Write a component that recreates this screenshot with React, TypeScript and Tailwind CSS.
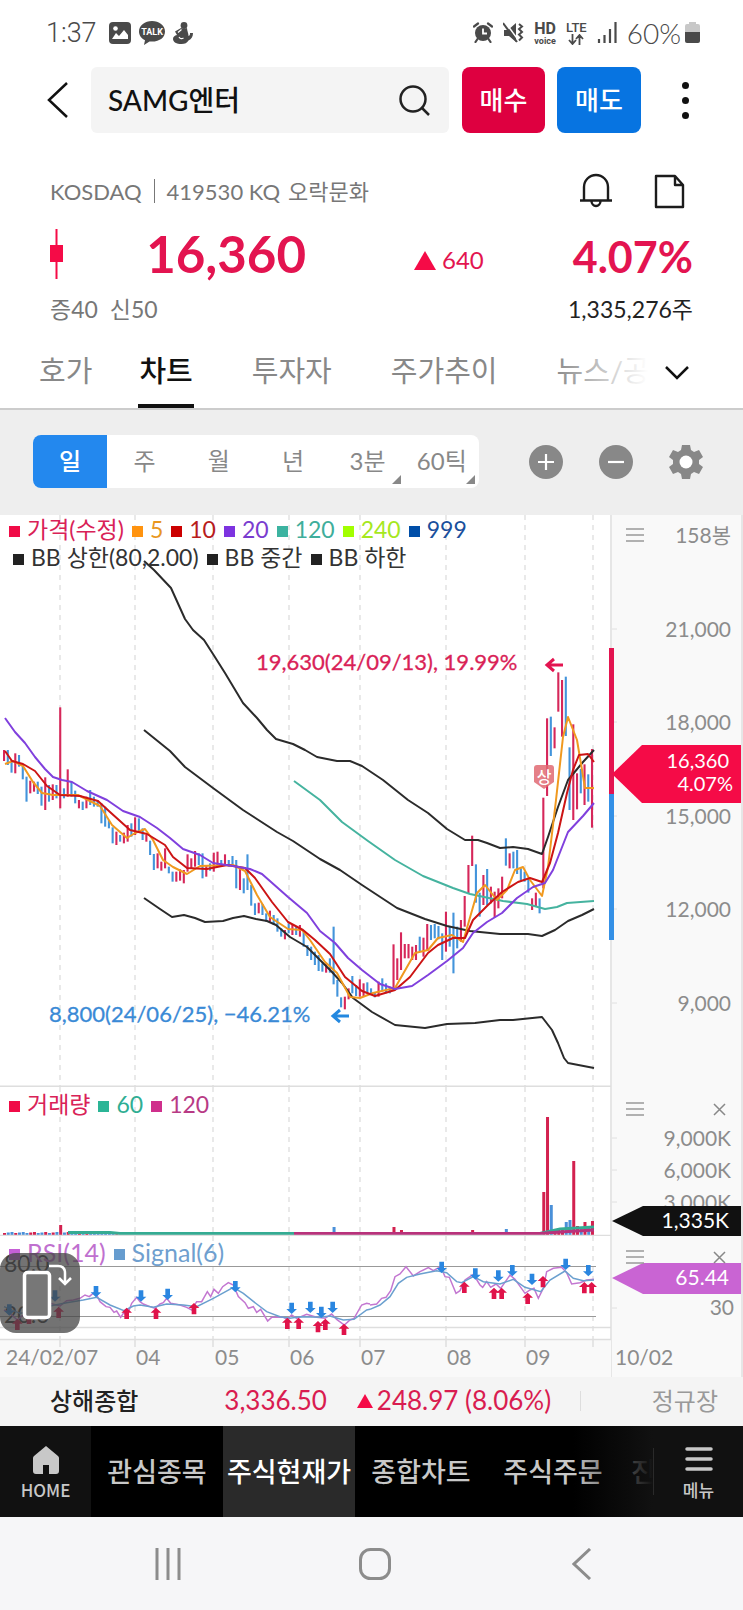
import { useState } from "react";
import type { ReactNode } from "react";
import clsx from "clsx";

type LegendItem = {
  label: string;
  text: string;
  mark: string;
};

type Signal = [number, number];

const TABS = [
  { label: "호가", gap: "mr-[45px]" },
  { label: "차트", gap: "mr-[57px]" },
  { label: "투자자", gap: "mr-[57px]" },
  { label: "주가추이", gap: "mr-[57px]" },
  { label: "뉴스/공시", gap: "" },
];

const PERIODS = ["일", "주", "월", "년", "3분", "60틱"];

const MENU = ["관심종목", "주식현재가", "종합차트", "주식주문"];

const PRICE_LEGEND: LegendItem[] = [
  { label: "가격(수정)", text: "text-[#d92257]", mark: "bg-[#f00b47]" },
  { label: "5", text: "text-[#e8971f]", mark: "bg-[#ff930f]" },
  { label: "10", text: "text-[#b81c1c]", mark: "bg-[#cc0000]" },
  { label: "20", text: "text-[#7a3ccf]", mark: "bg-[#7d33e0]" },
  { label: "120", text: "text-[#3fae9b]", mark: "bg-[#3cb3a0]" },
  { label: "240", text: "text-[#a6e81f]", mark: "bg-[#a2ff00]" },
  { label: "999", text: "text-[#1a4f9c]", mark: "bg-[#004ea8]" },
];

const BAND_LEGEND: LegendItem[] = [
  { label: "BB 상한(80,2.00)", text: "text-[#333]", mark: "bg-[#222]" },
  { label: "BB 중간", text: "text-[#333]", mark: "bg-[#222]" },
  { label: "BB 하한", text: "text-[#333]", mark: "bg-[#222]" },
];

const VOLUME_LEGEND: LegendItem[] = [
  { label: "거래량", text: "text-[#d92257]", mark: "bg-[#f00b47]" },
  { label: "60", text: "text-[#2fae93]", mark: "bg-[#2bb596]" },
  { label: "120", text: "text-[#b83a85]", mark: "bg-[#cf2f8c]" },
];

const RSI_LEGEND: LegendItem[] = [
  { label: "RSI(14)", text: "text-[#c070cf]", mark: "bg-[#c65fd6]" },
  { label: "Signal(6)", text: "text-[#6f9fcf]", mark: "bg-[#669ccf]" },
];

const MONTHS = [
  { x: 60, label: "24/02/07", labelX: 6 },
  { x: 135, label: "04", labelX: 136 },
  { x: 213, label: "05", labelX: 215 },
  { x: 289, label: "06", labelX: 290 },
  { x: 360, label: "07", labelX: 361 },
  { x: 446, label: "08", labelX: 447 },
  { x: 525, label: "09", labelX: 526 },
  { x: 593, label: "10/02", labelX: 615 },
];

// r = up day, b = down day, then high and low in thirds of a unit
const BARS =
  "r540,573 b540,585 b570,608 r550,610 b555,590 b585,628 b620,695 r632,670 r635,665 b635,672 " +
  "b650,707 r622,720 b645,695 r643,690 b645,685 r412,715 b655,685 r598,680 b635,680 b662,700 " +
  "r690,715 b695,720 r680,715 b660,705 b680,710 b690,710 b700,760 b710,770 b750,775 b772,820 " +
  "r785,825 b795,815 r788,820 r765,815 b760,800 r742,795 b745,785 b775,810 r795,815 b812,855 " +
  "b852,900 r850,895 r875,902 r835,895 b890,910 b905,935 r905,935 r898,932 r900,940 r853,905 " +
  "r865,895 r843,890 b850,885 b850,925 r885,920 b880,902 r848,905 r845,890 b870,890 r853,885 " +
  "b870,890 b858,885 b870,955 r895,960 b925,970 b853,960 b945,1007 b1000,1035 r998,1030 b1002,1035 " +
  "b1030,1055 r1022,1055 b1035,1065 b1045,1085 b1075,1100 r1080,1108 b1060,1090 r1065,1095 b1068,1095 r1065,1100 " +
  "b1085,1130 b1125,1158 b1130,1170 b1145,1185 b1155,1203 b1180,1205 r1180,1208 b1165,1208 b1070,1243 b1230,1280 " +
  "b1282,1312 r1280,1318 r1255,1288 b1218,1270 b1245,1278 r1228,1280 r1240,1280 b1237,1270 b1255,1275 b1268,1282 " +
  "r1235,1280 b1225,1262 b1240,1270 b1250,1270 r1123,1260 r1165,1230 r1087,1200 r1122,1165 r1122,1165 r1130,1170 " +
  "r1125,1170 b1100,1143 r1103,1160 r1062,1140 b1065,1110 b1062,1105 b1068,1108 b1090,1170 r1025,1145 b1070,1130 " +
  "b1028,1210 b1070,1135 r1050,1115 r978,1070 r885,972 r797,888 b883,998 b968,1040 r915,1005 b897,1005 " +
  "r950,1000 r965,1042 r955,1015 r920,985 b805,887 r850,895 b845,895 b840,912 b895,930 b905,935 " +
  "b925,968 r985,1020 r968,1010 b985,1030 r683,955 r445,678 b440,558 r472,535 r307,425 r330,500 " +
  "b320,498 b532,720 r463,750 r610,718 b597,670 r583,705 b613,695 r537,773";

const bars = BARS.split(" ").map((item, index) => {
  const [high, low] = item.slice(1).split(",").map(Number);

  return {
    x: 4 + index * 3.745,
    top: 55 + high / 3,
    bottom: 55 + low / 3,
    up: item[0] === "r",
  };
});

const UP = "#d6275a";
const DOWN = "#4394db";

// days whose volume stands out, by bar index
const VOLUME: Record<number, number> = {
  15: 10, 88: 8, 104: 8, 106: 5, 125: 5, 134: 6, 144: 43, 145: 118, 146: 30, 147: 5,
  148: 6, 149: 6, 150: 13, 151: 15, 152: 74, 153: 9, 154: 8, 155: 13, 156: 7, 157: 14,
};

const LINES = [
  {
    color: "#2b2b2b",
    points:
      "144,46 154,55 171,73 185,104 193,115 204,125 213,139 225,158 243,188 257,203 267,215 276,224 293,229 305,235 317,242 337,246 350,246 362,251 383,265 408,285 428,298 447,314 465,325 478,325 487,328 500,333 513,332 528,334 542,339 548,322 558,292 568,265 583,247 594,235",
  },
  {
    color: "#2b2b2b",
    points:
      "144,215 170,236 185,252 213,273 243,295 277,317 293,326 320,344 340,355 362,370 397,393 425,404 447,411 470,416 500,419 528,419 542,421 555,415 568,406 582,400 594,394",
  },
  {
    color: "#2b2b2b",
    points:
      "144,383 160,394 172,402 184,400 195,403 205,407 223,406 233,403 244,401 256,404 267,406 276,410 290,422 307,432 320,445 332,457 342,468 353,483 372,497 395,510 425,513 447,509 475,508 500,505 513,505 542,502 552,515 558,528 564,543 568,548 594,553",
  },
  {
    color: "#45b39f",
    points:
      "294,266 320,285 342,307 368,326 395,345 423,361 453,373 470,379 503,386 527,389 545,394 557,392 567,388 594,386",
  },
  {
    color: "#f0991f",
    points:
      "5,249 13,246 23,251 33,267 42,278 53,280 78,280 100,291 112,310 127,323 135,318 145,314 153,325 163,345 173,352 187,359 200,351 233,350 245,356 257,380 270,402 288,414 302,415 310,425 325,447 337,458 350,482 360,483 373,478 395,473 415,438 428,435 438,423 452,420 463,427 477,378 485,370 497,385 507,375 515,355 523,352 530,365 542,381 548,352 556,285 563,222 568,202 577,225 585,273 594,273",
  },
  {
    color: "#cc1414",
    points:
      "5,236 12,246 23,249 35,256 47,271 60,280 80,281 98,286 110,297 130,315 147,319 165,330 173,342 187,353 207,354 227,350 245,353 255,363 272,387 288,407 303,415 315,425 330,439 345,462 362,476 375,481 395,475 410,462 428,438 438,430 453,423 465,423 473,405 488,390 502,377 518,367 530,363 542,367 550,348 558,318 567,278 573,255 579,240 588,239 594,247",
  },
  {
    color: "#8040dd",
    points:
      "5,203 15,217 25,228 35,242 45,254 53,262 62,265 72,267 87,276 107,285 123,296 140,302 157,313 170,323 183,334 200,340 213,348 233,351 250,354 262,359 288,382 307,398 320,416 335,428 348,443 362,455 380,469 395,474 412,471 428,460 447,446 463,433 473,418 487,407 502,398 517,383 533,372 545,368 553,355 568,317 583,301 594,288",
  },
];

// The RSI history comes in two pages of 370 units each, drawn side by side.
const RSI_PAGES = [
  {
    offset: 0,
    rsi: "12,690 30,700 52,720 75,700 100,685 125,690 150,670 180,678 200,662 220,660 240,655 255,645 268,650 285,635 300,665 318,680 330,682 342,697 350,693 362,712 372,697 380,710 395,670 410,652 420,665 430,672 450,680 465,685 480,672 490,668 500,655 512,670 540,675 560,682 575,690 590,665 605,665 622,635 632,650 642,628 655,640 668,620 685,608 700,615 715,650 735,668 745,685 760,680 770,697 782,688 803,723 815,712 850,712 862,718 875,705 890,715 920,703 950,712 975,715 995,702 1010,718 1033,735 1050,720 1062,715 1085,675 1100,670 1110,672",
    signal:
      "12,680 60,700 100,695 150,678 200,668 250,660 290,652 330,675 372,692 400,678 420,675 460,682 500,672 550,675 590,680 640,655 700,622 730,640 770,672 800,695 840,710 870,715 900,710 960,712 990,708 1030,720 1062,718 1100,690 1110,688",
    down: [[28, 690], [165, 648], [288, 635], [423, 648], [503, 643], [706, 620], [875, 685], [931, 682], [964, 697], [998, 682]] as Signal[],
    up: [[52, 733], [87, 715], [176, 697], [380, 700], [468, 700], [582, 686], [862, 730], [896, 730], [954, 740], [976, 733], [1032, 748]] as Signal[],
  },
  {
    offset: 370,
    rsi: "0,675 20,672 35,655 48,652 62,632 75,590 90,582 108,560 130,588 150,575 175,563 190,572 212,560 225,590 238,592 258,640 270,632 285,600 310,583 330,615 338,622 350,605 362,622 378,612 392,625 420,585 435,598 465,640 480,630 492,625 505,655 520,625 530,575 550,565 575,562 590,578 605,612 630,608 650,600 672,598",
    signal:
      "0,688 30,675 60,650 85,610 110,592 150,582 200,572 230,578 260,605 275,608 310,590 340,605 390,612 430,598 465,622 512,635 540,600 585,573 610,595 640,602 672,600",
    down: [[215, 562], [316, 582], [385, 588], [427, 572], [486, 598], [587, 553], [655, 572]] as Signal[],
    up: [[283, 622], [372, 640], [395, 640], [473, 655], [519, 605], [643, 623], [665, 623]] as Signal[],
  },
];

function StatusBar() {
  return (
    <div className="flex h-[65px] items-center justify-between pr-[43px] pl-[46px] text-[#4a4a4a]">
      <div className="flex items-center gap-2">
        <span className="mr-1 font-[Roboto] text-[27px] leading-8 font-light">1:37</span>
        <svg width="22" height="22" viewBox="0 0 22 22" aria-hidden="true">
          <rect width="22" height="22" rx="4" fill="currentColor" />
          <path d="M3 17l4-6 3 3 5-6 4 5v4z" fill="#fff" />
          <circle cx="6.5" cy="6.5" r="2.3" fill="#fff" />
        </svg>
        <svg width="26" height="24" viewBox="0 0 26 24" aria-hidden="true">
          <path d="M13 0C6 0 0 4.500 0 10.500c0 4 2.500 7 6 8.800L5 24l5.500-3.600c10 .8 15.500-4 15.500-10C26 4.500 20 0 13 0z" fill="currentColor" />
          <text x="13" y="14" textAnchor="middle" fill="#fff" fontSize="9" fontWeight="700" fontFamily="Roboto">
            TALK
          </text>
        </svg>
        <svg width="20" height="22" viewBox="0 0 20 22" aria-hidden="true">
          <circle cx="11" cy="3.500" r="3.400" fill="currentColor" />
          <path
            d="M8 6q3 1 6 0c0 3 1.500 5 1.500 8 1.500-.5 1.500-1.500 1.500-3h3c0 3.500-1.500 6-4.500 7.500C14 21 12 22 8.500 22 3.500 22 0 20 0 17c0-2 1.500-3.500 4-4L2 9.500z"
            fill="currentColor"
          />
          <path d="M8.500 7.500L5 10.500M6 15c1 2 3 2 4.500 1" stroke="#fff" strokeWidth="1.200" fill="none" />
        </svg>
      </div>

      <div className="flex items-center gap-[10px]">
        <svg width="20" height="21" viewBox="0 0 20 21" aria-hidden="true">
          <circle cx="10" cy="11" r="8" fill="currentColor" />
          <path d="M1 4.500L5 1.500M19 4.500L15 1.500M4.500 17L2.500 20M15.500 17l2 3" stroke="currentColor" strokeWidth="2.200" strokeLinecap="round" />
          <path d="M10 6.500V11.500h4" stroke="#fff" strokeWidth="1.800" fill="none" />
        </svg>
        <svg width="21" height="21" viewBox="0 0 21 21" aria-hidden="true">
          <path d="M1 8h4l8-7v19l-7-6H1z" fill="currentColor" />
          <path d="M2 0l14 19" stroke="#fff" strokeWidth="1.500" />
          <path d="M0 1l14 19" stroke="currentColor" strokeWidth="2" />
          <path d="M16 2l3 2.500-3 2.500 3 3-3 2.500 3 3-3 3" stroke="currentColor" strokeWidth="2" fill="none" />
        </svg>
        <span className="flex flex-col items-center font-[Roboto] font-bold">
          <span className="text-[16px] leading-4">HD</span>
          <span className="text-[9px] leading-2">voice</span>
        </span>
        <span className="flex flex-col items-center font-[Roboto] font-medium">
          <span className="text-[13px] leading-[13px]">LTE</span>
          <svg width="16" height="11" viewBox="0 0 16 11" aria-hidden="true">
            <path d="M4.500 0v9M1 6l3.500 4L8 6M11.500 11V2M8 5l3.500-4L15 5" stroke="currentColor" strokeWidth="1.800" fill="none" />
          </svg>
        </span>
        <svg width="20" height="21" viewBox="0 0 20 21" aria-hidden="true">
          <path d="M2 21v-4M7.500 21v-8M13 21V7M18.500 21V0" stroke="currentColor" strokeWidth="2.200" />
        </svg>
        <span className="flex items-center gap-1">
          <span className="text-[28px] leading-8 font-light">60%</span>
          <svg width="15" height="21" viewBox="0 0 15 21" aria-hidden="true">
            <path d="M4 0h7v2h2a2 2 0 0 1 2 2v7H0V4a2 2 0 0 1 2-2h2z" fill="#c8c8c8" />
            <path d="M0 10h15v9a2 2 0 0 1-2 2H2a2 2 0 0 1-2-2z" fill="currentColor" />
          </svg>
        </span>
      </div>
    </div>
  );
}

function SearchHeader() {
  return (
    <header className="flex h-[70px] items-center pr-[38px] pl-[46px]">
      <button type="button" aria-label="뒤로" className="mr-[21px]">
        <svg width="24" height="38" viewBox="0 0 24 38" fill="none" stroke="#111" strokeWidth="2.500">
          <path d="M21 2L3 19l18 17" />
        </svg>
      </button>
      <label className="mr-[13px] flex h-[66px] min-w-0 flex-1 items-center rounded-md bg-[#f4f4f4] px-[17px]">
        <input
          aria-label="종목 검색"
          defaultValue="SAMG엔터"
          className="min-w-0 flex-1 bg-transparent text-[28px] font-medium text-[#111] outline-none"
        />
        <svg width="34" height="34" viewBox="0 0 34 34" fill="none" stroke="#222" strokeWidth="2.500" aria-hidden="true">
          <circle cx="15" cy="16" r="12.500" />
          <path d="M24 25l7 7" />
        </svg>
      </label>
      <button type="button" className="mr-3 h-[66px] w-[83px] rounded-lg bg-[#de0040] text-[26px] font-medium text-white">
        매수
      </button>
      <button type="button" className="mr-[24px] h-[66px] w-[84px] rounded-lg bg-[#0774e1] text-[26px] font-medium text-white">
        매도
      </button>
      <button type="button" aria-label="더보기" className="flex w-10 flex-col items-center gap-2">
        <span className="size-[7px] rounded-full bg-[#111]" />
        <span className="size-[7px] rounded-full bg-[#111]" />
        <span className="size-[7px] rounded-full bg-[#111]" />
      </button>
    </header>
  );
}

function Quote() {
  return (
    <section className="pt-9 pr-[50px] pl-[50px]">
      <div className="flex h-10 items-center">
        <p className="flex flex-1 items-center text-[22px] text-[#777]">
          <span>KOSDAQ</span>
          <span className="mx-3 h-6 w-px bg-[#777]" />
          <span className="mr-2">419530 KQ</span>
          <span>오락문화</span>
        </p>
        <button type="button" aria-label="알림" className="mr-[41px]">
          <svg width="34" height="36" viewBox="0 0 34 36" fill="none" stroke="#1c1c1c" strokeWidth="2.400">
            <path d="M5 27V14a12 12 0 0 1 24 0v13M1 27.500h32M12.500 28a4.500 5 0 0 0 9 0" />
          </svg>
        </button>
        <button type="button" aria-label="메모" className="mr-2">
          <svg width="31" height="35" viewBox="0 0 31 35" fill="none" stroke="#1c1c1c" strokeWidth="2.400" strokeLinejoin="round">
            <path d="M2 2h19l8 9v22H2zM21 2v9h8" />
          </svg>
        </button>
      </div>

      <div className="flex h-[86px] items-center text-[#e31450]">
        <svg width="13" height="50" viewBox="0 0 13 50" fill="#f50b47" aria-hidden="true">
          <path d="M0 16h13v17H0zM5.500 0h2v50h-2z" />
        </svg>
        <strong className="w-[243px] text-right text-[51px] leading-[56px] font-bold">16,360</strong>
        <span className="ml-[108px] flex items-center gap-[6px] pt-3 text-[24px]">
          <svg width="22" height="19" viewBox="0 0 22 19" fill="#f50b47" aria-hidden="true">
            <path d="M11 0l11 19H0z" />
          </svg>
          640
        </span>
        <strong className="ml-auto pt-[5px] text-[43px] leading-[50px] font-bold">4.07%</strong>
      </div>

      <div className="flex h-6 items-center justify-between text-[23px] text-[#777]">
        <span className="flex gap-3">
          <span>증40</span>
          <span>신50</span>
        </span>
        <span className="text-[#222]">1,335,276주</span>
      </div>
    </section>
  );
}

function Tabs() {
  const [active, setActive] = useState("차트");

  return (
    <nav className="relative mt-5 flex h-[69px] overflow-hidden border-b-2 border-[#ccc] pl-[38px]">
      {TABS.map((tab) => (
        <button
          key={tab.label}
          type="button"
          onClick={() => setActive(tab.label)}
          className={clsx(
            "shrink-0 border-b-4 px-px pb-1 text-[29px] leading-[50px]",
            tab.gap,
            active === tab.label ? "border-[#111] font-medium text-[#111]" : "border-transparent text-[#888]",
          )}
        >
          {tab.label}
        </button>
      ))}
      <div className="absolute inset-y-0 right-0 flex w-[190px]">
        <div className="w-[95px] bg-linear-to-r from-transparent to-white" />
        <button type="button" aria-label="탭 더보기" className="flex-1 bg-white pb-1 pl-4">
          <svg width="26" height="16" viewBox="0 0 26 16" fill="none" stroke="#111" strokeWidth="2.500">
            <path d="M2 2l11 11L24 2" />
          </svg>
        </button>
      </div>
    </nav>
  );
}

function PeriodBar() {
  const [period, setPeriod] = useState("일");

  return (
    <div className="flex h-[105px] items-center bg-[#eee] pr-10 pb-[2px] pl-[33px]">
      <div className="grid h-[53px] max-w-[446px] flex-1 grid-cols-6 overflow-hidden rounded-lg bg-white">
        {PERIODS.map((item, index) => (
          <button
            key={item}
            type="button"
            onClick={() => setPeriod(item)}
            className={clsx(
              "relative pb-[2px] text-[24px] whitespace-nowrap",
              item === period ? "bg-[#2388ee] font-medium text-white" : "text-[#888]",
            )}
          >
            {item}
            {index > 3 ? (
              <svg width="9" height="9" viewBox="0 0 9 9" className="absolute right-1 bottom-1" aria-hidden="true">
                <path d="M9 0v9H0z" fill="#888" />
              </svg>
            ) : null}
          </button>
        ))}
      </div>
      <div className="ml-auto flex gap-[36px]">
        <button type="button" aria-label="확대">
          <svg width="34" height="34" viewBox="0 0 34 34">
            <circle cx="17" cy="17" r="17" fill="#888" />
            <path d="M9 17h16M17 9v16" stroke="#fff" strokeWidth="2.200" />
          </svg>
        </button>
        <button type="button" aria-label="축소">
          <svg width="34" height="34" viewBox="0 0 34 34">
            <circle cx="17" cy="17" r="17" fill="#888" />
            <path d="M9 17h16" stroke="#fff" strokeWidth="2.200" />
          </svg>
        </button>
        <button type="button" aria-label="설정">
          <svg width="34" height="34" viewBox="0 0 34 34">
            <path
              d="M13 0h8l1 5 3 2 5-2 4 7-4 3v4l4 3-4 7-5-2-3 2-1 5h-8l-1-5-3-2-5 2-4-7 4-3v-4l-4-3 4-7 5 2 3-2z"
              fill="#888"
            />
            <circle cx="17" cy="17" r="6.500" fill="#fff" />
          </svg>
        </button>
      </div>
    </div>
  );
}

function Legend({ items }: { items: LegendItem[] }) {
  return (
    <div className="flex items-center gap-2 leading-7">
      {items.map((item) => (
        <span key={item.label} className={clsx("flex items-center gap-[7px]", item.text)}>
          <span className={clsx("mt-1 size-[11px]", item.mark)} />
          {item.label}
        </span>
      ))}
    </div>
  );
}

function PanelButtons({ closable }: { closable?: boolean }) {
  return (
    <>
      <button type="button" aria-label="지표 메뉴">
        <svg width="18" height="14" viewBox="0 0 18 14" stroke="#999" strokeWidth="1.500">
          <path d="M0 1h18M0 7h18M0 13h18" />
        </svg>
      </button>
      {closable ? (
        <button type="button" aria-label="지표 닫기" className="ml-auto">
          <svg width="13" height="13" viewBox="0 0 13 13" stroke="#888" strokeWidth="1.500">
            <path d="M1 1l11 11M12 1L1 12" />
          </svg>
        </button>
      ) : null}
    </>
  );
}

// Backdrop shared by every panel: month lines and the value axis strip
function PanelFrame({ top, height, children }: { top: number; height: number; children: ReactNode }) {
  return (
    <svg viewBox={`0 ${top} 743 ${height}`} className="block h-auto w-full" fontFamily="Lato" fontSize="21">
      <rect x="611" y={top} width="132" height={height} fill="#f9f9f9" />
      {MONTHS.map((month) => (
        <path key={month.x} d={`M${month.x} ${top}V${top + height}`} stroke="#e2e2e2" strokeWidth="1.500" strokeDasharray="5 5" />
      ))}
      <path d={`M611 ${top}V${top + height}M742 ${top}V${top + height}`} stroke="#e6e6e6" strokeWidth="2" />
      {children}
    </svg>
  );
}

function AxisLabel({ y, children }: { y: number; children: string }) {
  return (
    <>
      <path d={`M612 ${y - 8}h5`} stroke="#e0e0e0" />
      <text x="731" y={y} textAnchor="end" fill="#8c8c8c">
        {children}
      </text>
    </>
  );
}

function PricePanel() {
  return (
    <section className="relative">
      <PanelFrame top={0} height={572}>
        {bars.map((bar) => (
          <rect key={bar.x} x={bar.x - 1} y={bar.top} width="2.100" height={bar.bottom - bar.top} fill={bar.up ? UP : DOWN} />
        ))}
        {LINES.map((line) => (
          <polyline key={line.points} points={line.points} fill="none" stroke={line.color} strokeWidth="2" strokeLinejoin="round" />
        ))}
        <text x="256" y="155" fill="#d92257" fontSize="22" stroke="#d92257" strokeWidth=".3">
          19,630(24/09/13), 19.99%
        </text>
        <path d="M563 150h-15M554 144l-7 6 7 6" stroke="#e31450" strokeWidth="3" fill="none" />
        <text x="49" y="507" fill="#3a8ad6" fontSize="22" stroke="#3a8ad6" strokeWidth=".3">
          8,800(24/06/25), −46.21%
        </text>
        <path d="M349 501h-15M340 495l-7 6 7 6" stroke="#2388e0" strokeWidth="3" fill="none" />
        <path d="M537 250h14a3 3 0 0 1 3 3v14l-10 7-10-7v-14a3 3 0 0 1 3-3z" fill="#e06a72" fillOpacity=".85" />
        <text x="544" y="268" textAnchor="middle" fill="#fff" fontSize="16" fontWeight="500" fontFamily="Noto Sans CJK KR">
          상
        </text>

        <AxisLabel y={122}>21,000</AxisLabel>
        <AxisLabel y={215}>18,000</AxisLabel>
        <AxisLabel y={309}>15,000</AxisLabel>
        <AxisLabel y={402}>12,000</AxisLabel>
        <AxisLabel y={496}>9,000</AxisLabel>
        <rect x="609" y="133" width="5" height="147" fill="#e31450" />
        <rect x="609" y="279" width="5" height="146" fill="#3490e6" />
        <path d="M612 259l30-29h99v58h-99z" fill="#f50b47" />
        <text x="729" y="253" textAnchor="end" fill="#fff" fontSize="20">
          16,360
        </text>
        <text x="733" y="276" textAnchor="end" fill="#fff" fontSize="20">
          4.07%
        </text>
        <path d="M0 571.500h611" stroke="#dedede" strokeWidth="2" />
      </PanelFrame>

      <div className="absolute inset-x-0 top-0 flex justify-between text-[23px]">
        <div className="pl-[9px]">
          <Legend items={PRICE_LEGEND} />
          <div className="pl-1">
            <Legend items={BAND_LEGEND} />
          </div>
        </div>
        <div className="flex h-10 w-[117px] items-center justify-between pr-3 text-[21px] text-[#8c8c8c]">
          <PanelButtons />
          158봉
        </div>
      </div>
    </section>
  );
}

function VolumePanel() {
  return (
    <section className="relative">
      <PanelFrame top={572} height={149}>
        {bars.map((bar, index) => {
          const height = VOLUME[index] ?? 2 + (index % 3) / 2;

          return <rect key={bar.x} x={bar.x - 1} y={720 - height} width="3" height={height} fill={bar.up ? "#d3214f" : "#4a90d9"} />;
        })}
        <path d="M68 717.500L110 717.500 120 718.500H540L560 714 594 712" stroke="#35ab93" strokeWidth="3" fill="none" />
        <path d="M294 718.500H540L560 717 594 715" stroke="#b8327b" strokeWidth="3" fill="none" />

        <AxisLabel y={631}>9,000K</AxisLabel>
        <AxisLabel y={663}>6,000K</AxisLabel>
        <AxisLabel y={695}>3,000K</AxisLabel>
        <path d="M612 706l31-15h98v30h-98z" fill="#111" />
        <text x="729" y="713" textAnchor="end" fill="#fff">
          1,335K
        </text>
        <path d="M0 720.500h611" stroke="#dedede" strokeWidth="1.500" />
      </PanelFrame>

      <div className="absolute inset-x-0 top-[3px] flex justify-between text-[23px]">
        <div className="pl-[9px]">
          <Legend items={VOLUME_LEGEND} />
        </div>
        <div className="flex h-[38px] w-[117px] items-center pr-[17px]">
          <PanelButtons closable />
        </div>
      </div>
    </section>
  );
}

function RsiPanel() {
  return (
    <section className="relative">
      <PanelFrame top={721} height={141}>
        <path d="M0 751.500h596M0 801.500h596" stroke="#999" />
        <path d="M0 812.500h611" stroke="#dedede" strokeWidth="1.500" />
        <rect y="825" width="611" height="37" fill="#f9f9f9" />
        <path d="M0 824.500h611M60 825v7M135 825v7M213 825v7M289 825v7M360 825v7M446 825v7M525 825v7M593 825v7" stroke="#dedede" strokeWidth="1.500" />
        <text x="4" y="757" fill="#333" fontSize="23">80.0</text>
        <text x="4" y="808" fill="#333" fontSize="23">20.0</text>
        {RSI_PAGES.map((page) => (
          <g key={page.offset} transform={`translate(${page.offset} 565) scale(.33333)`} fill="none">
            <polyline points={page.rsi} stroke="#c377d1" strokeWidth="4.500" />
            <polyline points={page.signal} stroke="#6ba0cf" strokeWidth="4.500" />
            {page.down.map(([x, y]) => (
              <path key={x} d={`M${x} ${y + 17}l-16 -15h9v-19h14v19h9z`} fill="#2a86e0" />
            ))}
            {page.up.map(([x, y]) => (
              <path key={x} d={`M${x} ${y - 17}l-16 15h9v19h14v-19h9z`} fill="#e0134a" />
            ))}
          </g>
        ))}
        {MONTHS.map((month) => (
          <text key={month.label} x={month.labelX} y="850" fill="#8c8c8c">
            {month.label}
          </text>
        ))}
        <path d="M612 793h5" stroke="#e0e0e0" />
        <text x="734" y="800" textAnchor="end" fill="#8c8c8c">
          30
        </text>
        <path d="M612 763l31-15h98v31h-98z" fill="#c964d3" />
        <text x="729" y="770" textAnchor="end" fill="#fff">
          65.44
        </text>
      </PanelFrame>

      <div className="absolute inset-x-0 top-[2px] flex justify-between text-[25px]">
        <div className="pl-[9px]">
          <Legend items={RSI_LEGEND} />
        </div>
        <div className="flex h-[38px] w-[117px] items-center pr-[17px]">
          <PanelButtons closable />
        </div>
      </div>

      <button type="button" aria-label="화면 회전" className="absolute top-[17px] left-0 rounded-2xl bg-[#444]/75">
        <svg width="80" height="80" viewBox="0 0 80 80" fill="none" stroke="#fff" strokeWidth="3.500">
          <rect x="24.500" y="19.500" width="25" height="45" rx="3" fill="#777" />
          <path d="M49 13h9q7 0 7 7v10M59 25l6 6 6-6" strokeWidth="2.500" />
        </svg>
      </button>
    </section>
  );
}

function IndexTicker() {
  return (
    <div className="flex h-[49px] items-center bg-[#f4f4f4] pr-[25px] pb-[2px] pl-[50px] text-[24px]">
      <span className="font-medium text-[#222]">상해종합</span>
      <span className="ml-[86px] text-[26px] text-[#d91c50]">3,336.50</span>
      <span className="ml-[30px] flex items-center gap-1 text-[26px] text-[#d91c50]">
        <svg width="16" height="14" viewBox="0 0 16 14" fill="#f50b47" aria-hidden="true">
          <path d="M8 0l8 14H0z" />
        </svg>
        248.97 (8.06%)
      </span>
      <span className="ml-auto h-5 w-px bg-[#ddd]" />
      <span className="ml-[71px] text-[#999]">정규장</span>
    </div>
  );
}

function BottomMenu() {
  return (
    <nav className="flex h-[91px] bg-[#111] font-['Noto_Sans_CJK_KR',sans-serif] font-medium text-[#c8c8c8]">
      <a href="#home" className="flex w-[91px] shrink-0 flex-col items-center justify-center gap-1 pt-1">
        <svg width="28" height="28" viewBox="0 0 28 28" fill="#c8c8c8" aria-hidden="true">
          <path d="M14 0l12 10q1 1 1 2v13q0 3-3 3h-7v-9h-6v9H4q-3 0-3-3V12q0-1 1-2z" />
        </svg>
        <span className="text-[17px] leading-6">HOME</span>
      </a>
      <div className="relative flex min-w-0 flex-1 overflow-hidden bg-black">
        {MENU.map((item) => (
          <a
            key={item}
            href="#menu"
            className={clsx(
              "flex w-[132px] shrink-0 items-center justify-center text-[27px] whitespace-nowrap",
              item === "주식현재가" && "bg-[#2a2a2a] text-white",
            )}
          >
            {item}
          </a>
        ))}
        <a href="#menu" className="flex shrink-0 items-center pl-3 text-[27px]">
          진
        </a>
        <div className="absolute inset-y-0 right-0 w-[80px] bg-linear-to-r from-transparent to-[#111]" />
      </div>
      <span className="my-[22px] w-px bg-[#2a2a2a]" />
      <button type="button" className="flex w-[89px] shrink-0 flex-col items-center justify-center gap-1 pt-1">
        <svg width="28" height="28" viewBox="0 0 28 28" stroke="#c8c8c8" strokeWidth="3.500" strokeLinecap="round" aria-hidden="true">
          <path d="M2 3h24M2 13h24M2 23h24" />
        </svg>
        <span className="text-[17px] leading-6">메뉴</span>
      </button>
    </nav>
  );
}

function SystemNav() {
  return (
    <div className="grid h-[93px] grid-cols-3 place-items-center bg-[#f6f6f8] pr-[58px] pl-16">
      <button type="button" aria-label="최근 앱">
        <svg width="26" height="32" viewBox="0 0 26 32" stroke="#8c8c8c" strokeWidth="3">
          <path d="M2 0v32M13 0v32M24 0v32" />
        </svg>
      </button>
      <button type="button" aria-label="홈">
        <svg width="32" height="32" viewBox="0 0 32 32" fill="none" stroke="#8c8c8c" strokeWidth="3">
          <rect x="1.500" y="1.500" width="29" height="29" rx="10" />
        </svg>
      </button>
      <button type="button" aria-label="이전">
        <svg width="20" height="32" viewBox="0 0 20 32" fill="none" stroke="#8c8c8c" strokeWidth="3">
          <path d="M18 1L2 16l16 15" />
        </svg>
      </button>
    </div>
  );
}

export default function App() {
  return (
    <div className="bg-white font-['Lato','Noto_Sans_CJK_KR',sans-serif]">
      <StatusBar />
      <SearchHeader />
      <Quote />
      <Tabs />
      <PeriodBar />
      <PricePanel />
      <VolumePanel />
      <RsiPanel />
      <IndexTicker />
      <BottomMenu />
      <SystemNav />
    </div>
  );
}
